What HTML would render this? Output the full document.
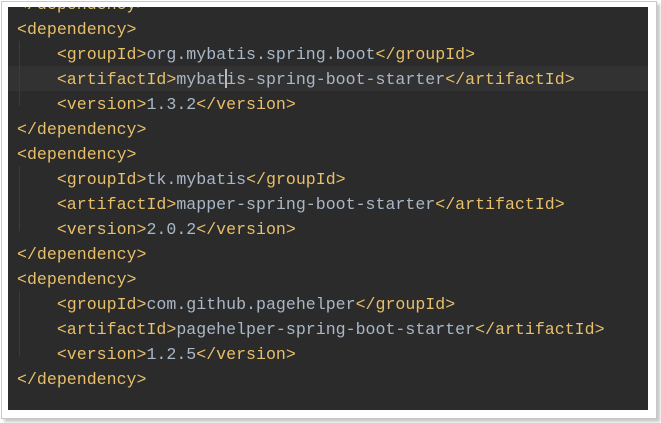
<!DOCTYPE html>
<html><head><style>
html,body{margin:0;padding:0;background:#fff;width:661px;height:423px;overflow:hidden}
.outer{position:absolute;left:1px;top:1px;width:654px;height:416px;background:#fff;border:1px solid #c8c8c8;box-shadow:3px 3px 3px #c8c8c8}
.dark{position:absolute;left:8px;top:7px;width:640px;height:403px;background:#2b2b2b;overflow:hidden}
.cur{position:absolute;left:0;top:59px;width:640px;height:25px;background:#323232}
.guide{position:absolute;left:11px;width:1px;background:#3b3b3b}
pre{position:absolute;left:9px;top:-15px;margin:0;font-family:"Liberation Mono",monospace;font-size:16.6px;line-height:25px;color:#a9b7c6}
.t{color:#e8bf6a}
.caret{display:inline-block;width:0;border-left:2px solid #bbb;height:19px;vertical-align:-4px;margin-left:-1px;margin-right:-1px}
</style></head><body>
<div class="outer"></div>
<div class="dark">
<div class="cur"></div>
<div class="guide" style="top:34px;height:65px"></div>
<div class="guide" style="top:159px;height:65px"></div>
<div class="guide" style="top:284px;height:65px"></div>
<pre><span class="t">&lt;/dependency&gt;</span>
<span class="t">&lt;dependency&gt;</span>
    <span class="t">&lt;groupId&gt;</span>org.mybatis.spring.boot<span class="t">&lt;/groupId&gt;</span>
    <span class="t">&lt;artifactId&gt;</span>mybat<span class="caret"></span>is-spring-boot-starter<span class="t">&lt;/artifactId&gt;</span>
    <span class="t">&lt;version&gt;</span>1.3.2<span class="t">&lt;/version&gt;</span>
<span class="t">&lt;/dependency&gt;</span>
<span class="t">&lt;dependency&gt;</span>
    <span class="t">&lt;groupId&gt;</span>tk.mybatis<span class="t">&lt;/groupId&gt;</span>
    <span class="t">&lt;artifactId&gt;</span>mapper-spring-boot-starter<span class="t">&lt;/artifactId&gt;</span>
    <span class="t">&lt;version&gt;</span>2.0.2<span class="t">&lt;/version&gt;</span>
<span class="t">&lt;/dependency&gt;</span>
<span class="t">&lt;dependency&gt;</span>
    <span class="t">&lt;groupId&gt;</span>com.github.pagehelper<span class="t">&lt;/groupId&gt;</span>
    <span class="t">&lt;artifactId&gt;</span>pagehelper-spring-boot-starter<span class="t">&lt;/artifactId&gt;</span>
    <span class="t">&lt;version&gt;</span>1.2.5<span class="t">&lt;/version&gt;</span>
<span class="t">&lt;/dependency&gt;</span></pre>
</div>
</body></html>
